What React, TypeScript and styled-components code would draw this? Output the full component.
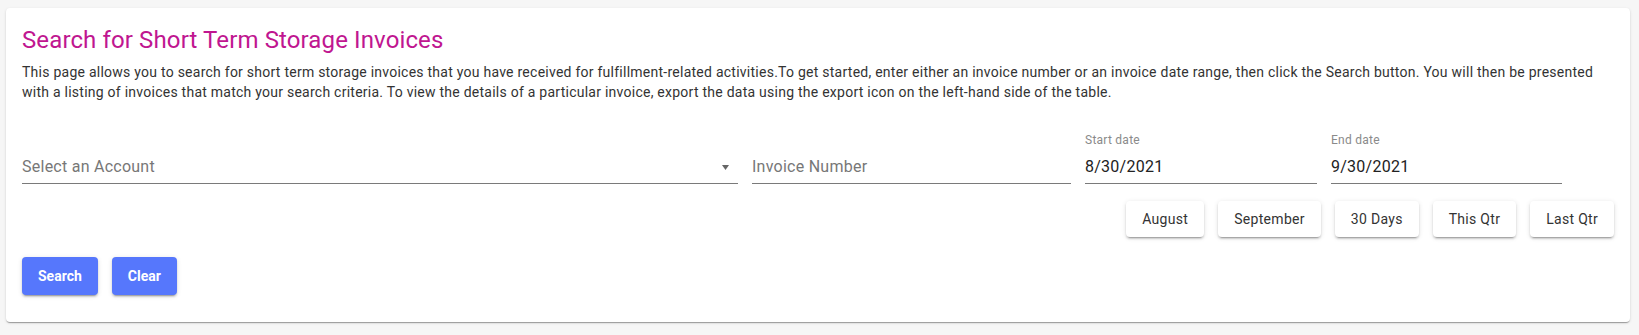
import React from "react";
import styled, { createGlobalStyle } from "styled-components";

const GlobalStyle = createGlobalStyle`
  html, body {
    margin: 0;
    padding: 0;
    background: #f6f6f6;
  }
  body {
    font-family: Roboto, "Liberation Sans", Arial, sans-serif;
    letter-spacing: 0.25px;
    -webkit-font-smoothing: antialiased;
  }
`;

const Page = styled.div`
  padding: 8px 9px 13px 6px;
`;

const Card = styled.section`
  background: #fff;
  border-radius: 4px;
  padding: 16px 16px 27px;
  box-shadow: 0 2px 1px -1px rgba(0, 0, 0, 0.2), 0 1px 1px 0 rgba(0, 0, 0, 0.14),
    0 1px 3px 0 rgba(0, 0, 0, 0.12);
`;

const Title = styled.h1`
  margin: 0;
  font-size: 24px;
  line-height: 32px;
  font-weight: 400;
  letter-spacing: 0.12px;
  color: #c01690;
`;

const Intro = styled.p`
  margin: 6px 0 0;
  font-size: 14px;
  line-height: 20px;
  color: #333;
`;

const FieldRow = styled.div`
  display: grid;
  grid-template-columns: 716px 319px 232px 231px;
  column-gap: 14px;
  margin-top: 30px;
`;

const Field = styled.div`
  display: flex;
  flex-direction: column;
`;

const Label = styled.label`
  height: 16px;
  font-size: 12px;
  line-height: 16px;
  color: #8a8a8a;
`;

const InputBox = styled.div`
  display: flex;
  align-items: center;
  padding: 9px 0 7px;
  border-bottom: 1px solid #7a7a7a;
`;

const TextInput = styled.input`
  flex: 1;
  min-width: 0;
  height: 19px;
  padding: 0;
  border: none;
  outline: none;
  background: transparent;
  font: inherit;
  font-size: 16px;
  line-height: 19px;
  letter-spacing: 0.25px;
  color: #222;

  &::placeholder {
    color: #777;
    opacity: 1;
  }
`;

const SelectText = styled.span`
  flex: 1;
  font-size: 16px;
  line-height: 19px;
  color: #777;
`;

const Caret = styled.svg`
  width: 7px;
  height: 5px;
  margin: 2px 9px 0 0;
`;

const PresetRow = styled.div`
  display: flex;
  justify-content: flex-end;
  gap: 14px;
  margin-top: 17px;
`;

const PresetButton = styled.button`
  height: 36px;
  padding: 0 16px;
  border: none;
  border-radius: 4px;
  background: #fff;
  color: #333;
  font-family: inherit;
  font-size: 14px;
  font-weight: 400;
  letter-spacing: 0.3px;
  cursor: pointer;
  box-shadow: 0 3px 1px -2px rgba(0, 0, 0, 0.2), 0 2px 2px 0 rgba(0, 0, 0, 0.14),
    0 1px 5px 0 rgba(0, 0, 0, 0.12);
`;

const ActionRow = styled.div`
  display: flex;
  gap: 14px;
  margin-top: 20px;
`;

const ActionButton = styled.button`
  height: 38px;
  padding: 0 16px;
  border: none;
  border-radius: 4px;
  background: #5677fc;
  color: #fff;
  font-family: inherit;
  font-size: 14px;
  font-weight: 700;
  cursor: pointer;
  box-shadow: 0 3px 1px -2px rgba(0, 0, 0, 0.2), 0 2px 2px 0 rgba(0, 0, 0, 0.14),
    0 1px 5px 0 rgba(0, 0, 0, 0.12);
`;

const presets = ["August", "September", "30 Days", "This Qtr", "Last Qtr"];

const App: React.FC = () => {
  return (
    <Page>
      <GlobalStyle />
      <Card>
        <Title>Search for Short Term Storage Invoices</Title>
        <Intro>
          This page allows you to search for short term storage invoices that
          you have received for fulfillment-related activities.To get started,
          enter either an invoice number or an invoice date range, then click
          the Search button. You will then be presented with a listing of
          invoices that match your search criteria. To view the details of a
          particular invoice, export the data using the export icon on the
          left-hand side of the table.
        </Intro>

        <FieldRow>
          <Field>
            <Label />
            <InputBox>
              <SelectText>Select an Account</SelectText>
              <Caret viewBox="0 0 7 5">
                <polygon points="0,0 7,0 3.5,5" fill="#666" />
              </Caret>
            </InputBox>
          </Field>
          <Field>
            <Label />
            <InputBox>
              <TextInput placeholder="Invoice Number" />
            </InputBox>
          </Field>
          <Field>
            <Label>Start date</Label>
            <InputBox>
              <TextInput defaultValue="8/30/2021" />
            </InputBox>
          </Field>
          <Field>
            <Label>End date</Label>
            <InputBox>
              <TextInput defaultValue="9/30/2021" />
            </InputBox>
          </Field>
        </FieldRow>

        <PresetRow>
          {presets.map((p) => (
            <PresetButton key={p}>{p}</PresetButton>
          ))}
        </PresetRow>

        <ActionRow>
          <ActionButton>Search</ActionButton>
          <ActionButton>Clear</ActionButton>
        </ActionRow>
      </Card>
    </Page>
  );
};

export default App;
